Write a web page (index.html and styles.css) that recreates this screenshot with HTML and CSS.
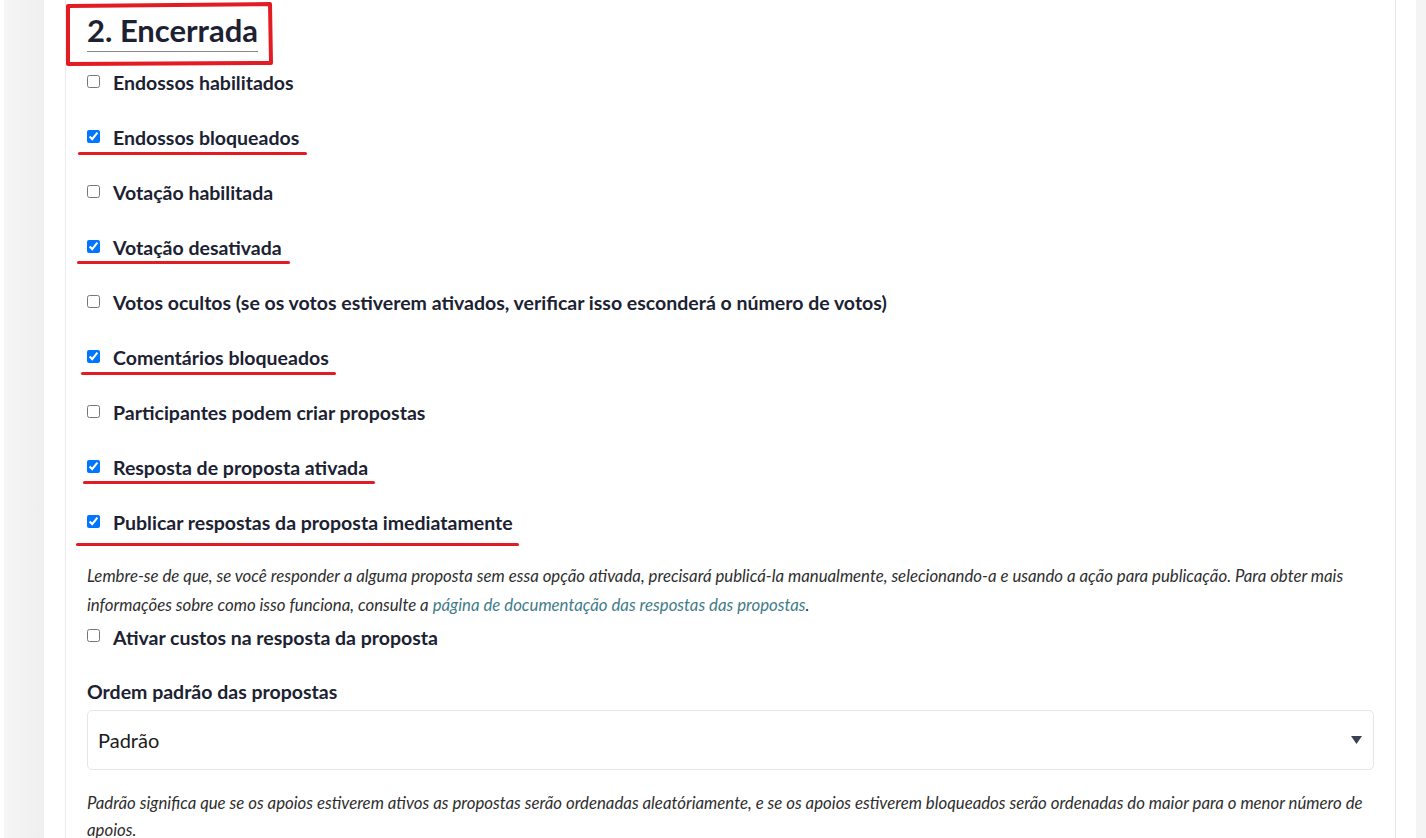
FILE: index.html
```html
<!DOCTYPE html>
<html lang="pt">
<head>
<meta charset="utf-8">
<title>Encerrada</title>
<link rel="stylesheet" href="styles.css">
</head>
<body>
<div class="page">
  <div class="gutter-left"></div>
  <div class="main">
    <div class="card">
      <div class="heading-wrap">
        <h2 class="heading">2. Encerrada</h2>
        <svg class="mark-box" width="214" height="68" viewBox="0 0 214 68"><path d="M4 6 L4 64 L207 63 L206 4 Z" fill="none" stroke="#e31b23" stroke-width="4" stroke-linejoin="round" stroke-linecap="round"/></svg>
      </div>
      <label class="row"><input type="checkbox"><span>Endossos habilitados</span></label>
      <label class="row"><input type="checkbox" checked><span>Endossos bloqueados</span><i class="mark" style="left:-9px;width:229px"></i></label>
      <label class="row"><input type="checkbox"><span>Votação habilitada</span></label>
      <label class="row"><input type="checkbox" checked><span>Votação desativada</span><i class="mark" style="left:-10px;width:213px;top:41px"></i></label>
      <label class="row"><input type="checkbox"><span>Votos ocultos (se os votos estiverem ativados, verificar isso esconderá o número de votos)</span></label>
      <label class="row"><input type="checkbox" checked><span>Comentários bloqueados</span><i class="mark" style="left:-6px;width:255px;top:42px"></i></label>
      <label class="row"><input type="checkbox"><span>Participantes podem criar propostas</span></label>
      <label class="row"><input type="checkbox" checked><span>Resposta de proposta ativada</span><i class="mark" style="left:-4px;width:292px;top:41px"></i></label>
      <label class="row"><input type="checkbox" checked><span>Publicar respostas da proposta imediatamente</span><i class="mark" style="left:-11px;width:443px;top:48px"></i></label>
      <p class="help help-first">Lembre-se de que, se você responder a alguma proposta sem essa opção ativada, precisará publicá-la manualmente, selecionando-a e usando a ação para publicação. Para obter mais informações sobre como isso funciona, consulte a <a href="#">página de documentação das respostas das propostas</a>.</p>
      <label class="row row-short"><input type="checkbox"><span>Ativar custos na resposta da proposta</span></label>
      <div class="field-label">Ordem padrão das propostas</div>
      <div class="select">
        <span>Padrão</span>
        <svg class="caret" width="11" height="8" viewBox="0 0 11 8"><path d="M0 0 H11 L5.5 8 Z" fill="#3b4152"/></svg>
      </div>
      <p class="help help-second">Padrão significa que se os apoios estiverem ativos as propostas serão ordenadas aleatóriamente, e se os apoios estiverem bloqueados serão ordenadas do maior para o menor número de apoios.</p>
    </div>
  </div>
  <div class="gutter-right"></div>
</div>
</body>
</html>
```

FILE: styles.css
```css
html, body {
  margin: 0;
  padding: 0;
  background: #ffffff;
  height: 100%;
  overflow: hidden;
}
body {
  font-family: "Lato", "Liberation Sans", sans-serif;
  color: #1c2232;
}
.page {
  display: flex;
  height: 838px;
  padding-left: 4px;
}
.gutter-left {
  width: 40px;
  background: linear-gradient(90deg, #f5f5f5, #efefef);
}
.gutter-right {
  width: 10px;
  background: #f4f4f4;
}
.main {
  flex: 1;
  padding: 0 20px 0 21px;
}
.card {
  height: 100%;
  border-left: 1px solid #ececec;
  border-right: 1px solid #e6e6e6;
  padding: 0 21px;
  display: flex;
  flex-direction: column;
}
.card > * {
  flex-shrink: 0;
}
.heading-wrap {
  position: relative;
  height: 55px;
}
.heading {
  display: inline-block;
  margin: 0;
  padding-top: 13px;
  font-size: 31px;
  line-height: 35px;
  font-weight: 700;
  border-bottom: 1px solid #8a8a8a;
  padding-bottom: 3px;
}
.mark-box {
  position: absolute;
  left: -23px;
  top: 0;
}
.row {
  position: relative;
  display: flex;
  align-items: center;
  height: 55px;
  font-size: 19.5px;
  font-weight: 700;
}
.row input {
  margin: 0 13px 3px 0;
  width: 13px;
  height: 13px;
}
.mark {
  position: absolute;
  top: 42px;
  height: 3px;
  border-radius: 2px;
  background: #e31b23;
}
.help {
  margin: 0;
  font-size: 16.8px;
  font-style: italic;
  color: #2e2e2e;
}
.help-first {
  margin-top: 11px;
  line-height: 29px;
}
.help a {
  color: #3f7c89;
  text-decoration: none;
}
.row-short {
  height: 36px;
}
.field-label {
  margin-top: 25px;
  font-size: 19.5px;
  line-height: 24px;
  font-weight: 700;
}
.select {
  margin-top: 6px;
  height: 58px;
  border: 1px solid #e6e6e6;
  border-radius: 5px;
  display: flex;
  align-items: center;
  justify-content: space-between;
  padding: 0 11px 0 10px;
  font-size: 20px;
  color: #1a1a1a;
}
.help-second {
  margin-top: 19px;
  line-height: 27px;
}
```
